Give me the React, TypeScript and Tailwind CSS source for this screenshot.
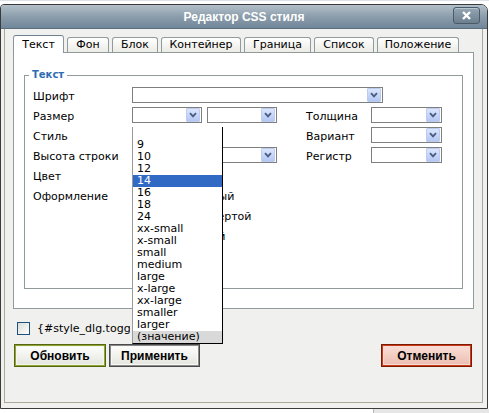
import React from "react";

const SIZES = [
  "",
  "9",
  "10",
  "12",
  "14",
  "16",
  "18",
  "24",
  "xx-small",
  "x-small",
  "small",
  "medium",
  "large",
  "x-large",
  "xx-large",
  "smaller",
  "larger",
  "(значение)",
];

function Arrow() {
  return (
    <span className="w-[14px] h-[14px] flex items-center justify-center rounded-[1px] border border-[#bccbf0] bg-linear-to-b from-[#dbe5fd] to-[#b4c7f4]">
      <svg width="8" height="6" viewBox="0 0 8 6">
        <path d="M1 1.2 L4 4.4 L7 1.2" stroke="#4b5e82" strokeWidth="1.9" fill="none" />
      </svg>
    </span>
  );
}

function Sel({ className }: { className: string }) {
  return (
    <div className={`h-[16px] border border-[#7f7f7f] bg-white flex items-center justify-end pr-px ${className}`}>
      <Arrow />
    </div>
  );
}

function Input({ className }: { className: string }) {
  return <div className={`h-[16px] border border-[#7f7f7f] bg-white ${className}`} />;
}

function Check() {
  return (
    <span className="w-[13px] h-[13px] shrink-0 border border-[#1c5180] bg-linear-to-br from-[#dcdcd7] to-white" />
  );
}

function Row({ label, children }: { label: string; children?: React.ReactNode }) {
  return (
    <div className="flex h-[20px]">
      <div className="w-[99px] shrink-0 leading-[20px]">{label}</div>
      {children}
    </div>
  );
}

function Side({ label }: { label: string }) {
  return (
    <>
      <div className="w-[65px] ml-[29px] leading-[20px]">{label}</div>
      <Sel className="w-[71px]" />
    </>
  );
}

const TABS = [
  { t: "Текст", w: "w-[51px]", active: true },
  { t: "Фон", w: "w-[42px]" },
  { t: "Блок", w: "w-[46px]" },
  { t: "Контейнер", w: "w-[80px]" },
  { t: "Граница", w: "w-[67px]" },
  { t: "Список", w: "w-[60px]" },
  { t: "Положение", w: "w-[82px]" },
];

export default function App() {
  return (
    <div className="w-[489px] h-[413px] bg-white font-['DejaVu_Sans',sans-serif] text-[11px] text-black overflow-hidden">
      <div className="h-[4px] border-t border-[#dde2e8]" />
      <div className="w-[488px] h-[405px] border border-[#3a3a3a] rounded-tl-[4px] rounded-tr-[7px] overflow-hidden flex flex-col bg-[#f0f0ee]">
        {/* title bar */}
        <div className="h-[24px] shrink-0 flex items-start border-b border-[#5d6f7d] bg-linear-to-b from-[#b3c0ca] via-[#8c9eac] to-[#71869a]">
          <div className="w-[34px]" />
          <div className="flex-1 h-[23px] flex items-center justify-center font-['Liberation_Sans',sans-serif] font-bold text-[12px] text-white">
            Редактор CSS стиля
          </div>
          <div className="w-[27px] h-[17px] mt-[2px] mr-[7px] rounded-[3px] border border-[#4a5a68] bg-linear-to-b from-[#95a6b4] to-[#6c7f8f] flex items-center justify-center shadow-[inset_0_1px_0_#b8c5cf]">
            <svg width="9" height="9" viewBox="0 0 9 9">
              <path d="M1 1 L8 8 M8 1 L1 8" stroke="white" strokeWidth="2.4" />
            </svg>
          </div>
        </div>

        {/* body */}
        <div className="flex-1 pl-[3px] pr-[4px] pb-[5px] flex flex-col">
          <div className="flex-1 border-x border-b border-[#aca899] px-[8px] pt-[6px] flex flex-col">
            {/* tabs */}
            <div className="flex items-end gap-[3px] h-[18px]">
              {TABS.map((tab) =>
                tab.active ? (
                  <div
                    key={tab.t}
                    className={`${tab.w} h-[18px] relative z-10 bg-white border-x border-t border-[#8896a3] border-t-[#6f7f8f] rounded-t-[3px] text-center leading-[16px] pt-[1px]`}
                  >
                    {tab.t}
                  </div>
                ) : (
                  <div
                    key={tab.t}
                    className={`${tab.w} h-[15px] mb-px bg-linear-to-b from-white to-[#ecebe5] border-x border-t border-[#919b9c] rounded-t-[3px] flex items-center justify-center`}
                  >
                    {tab.t}
                  </div>
                )
              )}
            </div>

            {/* panel */}
            <div className="-mt-px h-[257px] border border-[#919b9c] bg-white px-[10px] pt-[15px]">
              <fieldset className="border border-[#919b9c] p-0 m-0">
                <legend className="ml-[4px] px-[3px] leading-[14px] font-bold text-[10px] text-[#2c6cb4]">
                  Текст
                </legend>
                <div className="pt-[5px] pb-px pl-[8px]">
                  <Row label="Шрифт">
                    <Sel className="w-[251px]" />
                  </Row>
                  <Row label="Размер">
                    <div className="relative">
                      <Sel className="w-[70px]" />
                      <div className="absolute left-0 top-full z-20 w-[91px] bg-white border-l border-l-[#9a9a9a] border-r border-b border-black">
                        {SIZES.map((s, i) => (
                          <div
                            key={i}
                            className={`h-[12px] leading-[12px] pl-[4px] whitespace-nowrap ${
                              s === "14"
                                ? "bg-[#316ac5] text-white"
                                : s === "(значение)"
                                ? "bg-[#d9d9d9]"
                                : ""
                            }`}
                          >
                            {s}
                          </div>
                        ))}
                      </div>
                    </div>
                    <Sel className="w-[70px] ml-[5px]" />
                    <Side label="Толщина" />
                  </Row>
                  <Row label="Стиль">
                    <Sel className="w-[70px]" />
                    <div className="w-[75px]" />
                    <Side label="Вариант" />
                  </Row>
                  <Row label="Высота строки">
                    <Input className="w-[70px]" />
                    <Sel className="w-[70px] ml-[5px]" />
                    <Side label="Регистр" />
                  </Row>
                  <Row label="Цвет">
                    <Input className="w-[60px]" />
                    <div className="w-[16px] h-[16px] ml-[4px] border border-[#7f7f7f]" />
                  </Row>
                  <div className="flex h-[100px]">
                    <div className="w-[99px] shrink-0 leading-[20px]">Оформление</div>
                    <div className="flex flex-col">
                      {["подчеркнутый", "с верхней чертой", "зачеркнутый"].map((t) => (
                        <div key={t} className="h-[20px] flex items-center gap-[5px]">
                          <Check />
                          <span>{t}</span>
                        </div>
                      ))}
                    </div>
                  </div>
                </div>
              </fieldset>
            </div>

            {/* checkbox */}
            <div className="mt-[13px] h-[13px] flex items-center gap-[7px] pl-[4px]">
              <Check />
              <span className="leading-[13px] w-[93px] overflow-hidden whitespace-nowrap">
                {"{#style_dlg.toggle_insert_span}"}
              </span>
            </div>

            {/* buttons */}
            <div className="mt-[9px] flex pl-px pr-[2px] font-['Liberation_Sans',sans-serif] font-bold text-[12px]">
              <button className="w-[92px] h-[23px] border border-[#566610] shadow-[inset_0_0_0_1px_#8ea437,inset_0_0_0_2px_#f4f6e8] bg-linear-to-b from-white to-[#e4e4de]">
                Обновить
              </button>
              <button className="w-[91px] h-[23px] ml-[3px] border border-[#4a4a4a] shadow-[inset_0_0_0_1px_#8a8a8a,inset_0_0_0_2px_#f8f8f8] bg-linear-to-b from-white to-[#e4e4de]">
                Применить
              </button>
              <div className="flex-1" />
              <button className="w-[91px] h-[23px] border border-[#7c1a02] shadow-[inset_0_0_0_1px_#c83a18,inset_0_0_0_2px_#f6dcd4] bg-linear-to-b from-[#fae0d8] to-[#ebbcb0]">
                Отменить
              </button>
            </div>
          </div>
        </div>
      </div>
      <div className="h-[4px] flex">
        <div className="w-[373px]" />
        <div className="flex-1 border-l border-[#b8b8b8] bg-[#e6e6e6]" />
      </div>
    </div>
  );
}
